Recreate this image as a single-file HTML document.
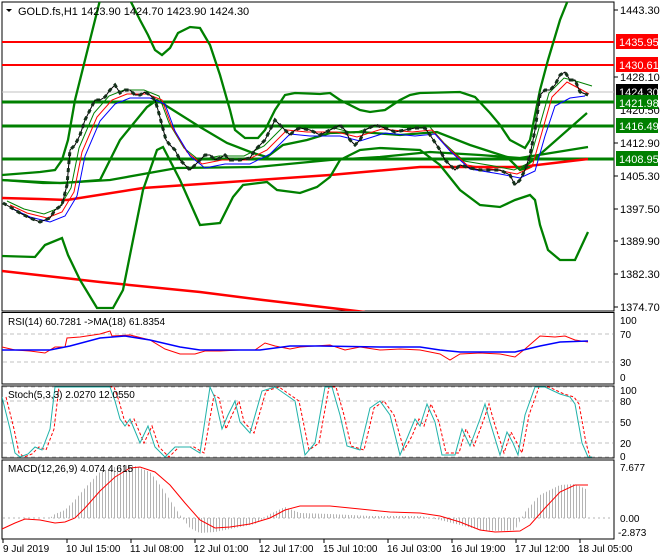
<!DOCTYPE html>
<html><head><meta charset="utf-8"><style>
html,body{margin:0;padding:0;background:#fff;}
svg{display:block;font-family:"Liberation Sans",sans-serif;}
</style></head><body>
<svg width="660" height="560" viewBox="0 0 660 560" xmlns="http://www.w3.org/2000/svg">
<defs>
<pattern id="hist" width="3" height="10" patternUnits="userSpaceOnUse"><rect x="0" y="0" width="1" height="10" fill="#b4b4b4"/></pattern>
<clipPath id="cm"><rect x="2" y="2" width="612" height="309"/></clipPath>
<clipPath id="cs"><rect x="2" y="386" width="612" height="72"/></clipPath>
</defs>
<rect width="660" height="560" fill="#fff"/>
<rect x="2" y="2" width="612" height="309" fill="none" stroke="#000"/>
<rect x="2" y="312.5" width="612" height="71.5" fill="none" stroke="#000"/>
<rect x="2" y="386" width="612" height="72" fill="none" stroke="#000"/>
<rect x="2" y="460" width="612" height="79" fill="none" stroke="#000"/>

<g clip-path="url(#cm)">
<line x1="2" y1="92" x2="614" y2="92" stroke="#c0c0c0"/>
<line x1="2" y1="42" x2="614" y2="42" stroke="#f00" stroke-width="2"/>
<line x1="2" y1="65" x2="614" y2="65" stroke="#f00" stroke-width="2"/>
<line x1="2" y1="102" x2="614" y2="102" stroke="#008000" stroke-width="3"/>
<line x1="2" y1="126" x2="614" y2="126" stroke="#008000" stroke-width="3"/>
<line x1="2" y1="159" x2="614" y2="159" stroke="#008000" stroke-width="3"/>
<polyline fill="none" stroke="#f00" stroke-width="2.5" points="2,198 40,199 67,200 143,188 330,175 420,167 520,167 588,159"/>
<polyline fill="none" stroke="#f00" stroke-width="2.5" points="2,271 100,282 200,292 263,300 365,312"/>
<g fill="none" stroke="#008000" stroke-width="2.3">
<polyline points="2,175 40,172 55,170 62,160 68,140 75,100 85,60 95,20 100,0 130,0 140,20 148,35 155,50 162,55 170,48 178,33 190,27 200,28 210,45 220,75 230,110 235,130 245,138 258,138 265,130 275,110 285,95 295,93 320,94 330,93 340,100 360,110 370,112 385,110 400,100 410,95 420,93 460,92 475,97 490,113 500,125 510,140 525,148 530,140 535,115 540,90 548,60 560,20 568,0"/>
<polyline points="2,256 35,257 45,245 62,238 68,255 80,280 97,308 113,308 123,290 133,240 143,190 157,150 163,147 180,180 200,225 220,223 233,197 243,185 267,182 277,190 300,193 317,187 330,177 340,160 360,150 380,148 420,150 440,165 460,190 480,205 500,207 515,200 530,195 535,200 540,225 548,250 560,260 575,260 588,232"/>
<polyline points="2,180 43,183 63,183 100,180 120,140 147,107 157,100 173,110 200,127 227,143 253,153 267,157 283,145 307,140 330,133 360,132 400,135 437,132 470,145 507,157 520,170 530,167"/>
<polyline points="2,180 60,183 110,180 177,168 257,167 330,160 380,157 430,152 480,155 520,158 588,147"/>
<polyline points="520,170 537,157 587,113"/>
</g>
<g fill="none" stroke-width="1">
<polyline stroke="#008000" transform="translate(4,-2)" points="3,203 20,211 40,216 55,210 67,190 75,150 90,115 105,98 120,92 140,92 155,98 165,125 180,150 195,162 215,158 240,158 260,148 280,128 300,130 330,130 350,135 375,127 405,130 425,128 440,145 460,163 490,168 510,172 525,165 535,130 545,95 560,80 575,84 588,88"/>
<polyline stroke="#f00" transform="translate(7,2)" points="3,203 20,211 40,216 55,210 67,190 75,150 90,115 105,98 120,92 140,92 155,98 165,125 180,150 195,162 215,158 240,158 260,148 280,128 300,130 330,130 350,135 375,127 405,130 425,128 440,145 460,163 490,168 510,172 525,165 535,130 545,95 560,80 575,88 582,92"/>
<polyline stroke="#00f" transform="translate(10,6)" points="3,203 20,211 40,216 55,210 67,190 75,150 90,115 105,98 120,92 140,92 155,98 165,125 180,150 195,162 215,158 240,158 260,148 280,128 300,130 330,130 350,135 375,127 405,130 425,128 440,145 460,163 490,168 510,172 525,165 535,130 545,100 560,92 575,90"/>
</g>
<polyline fill="none" stroke="#000" stroke-width="1" points="3,203 10,207 20,213 30,218 40,222 50,218 55,210 62,205 67,185 70,150 75,145 80,135 85,120 90,110 95,100 100,100 105,97 110,90 115,85 120,93 125,90 130,90 135,95 140,95 145,92 150,95 155,100 158,110 162,125 166,140 170,145 175,150 180,160 185,165 190,170 195,165 200,160 205,155 210,155 215,160 220,158 225,155 230,160 240,160 250,158 255,150 260,145 265,140 270,130 275,120 280,125 285,130 290,135 295,130 300,128 310,130 320,135 330,130 340,125 345,130 350,140 355,145 360,140 365,130 375,125 385,128 395,132 405,130 415,128 425,128 430,135 440,150 445,160 450,165 455,170 460,165 470,168 480,170 490,170 500,170 510,175 515,185 520,180 525,170 530,155 535,130 540,95 545,90 550,90 555,85 560,75 565,72 570,80 575,80 580,92 588,95"/>
<polyline fill="none" stroke="#14301a" stroke-width="3" stroke-dasharray="4 4" points="3,203 10,207 20,213 30,218 40,222 50,218 55,210 62,205 67,185 70,150 75,145 80,135 85,120 90,110 95,100 100,100 105,97 110,90 115,85 120,93 125,90 130,90 135,95 140,95 145,92 150,95 155,100 158,110 162,125 166,140 170,145 175,150 180,160 185,165 190,170 195,165 200,160 205,155 210,155 215,160 220,158 225,155 230,160 240,160 250,158 255,150 260,145 265,140 270,130 275,120 280,125 285,130 290,135 295,130 300,128 310,130 320,135 330,130 340,125 345,130 350,140 355,145 360,140 365,130 375,125 385,128 395,132 405,130 415,128 425,128 430,135 440,150 445,160 450,165 455,170 460,165 470,168 480,170 490,170 500,170 510,175 515,185 520,180 525,170 530,155 535,130 540,95 545,90 550,90 555,85 560,75 565,72 570,80 575,80 580,92 588,95"/>
</g>
<polygon points="6,9 12,9 9,12" fill="#000"/>
<text x="18" y="15" font-size="11" fill="#000">GOLD.fs,H1  1423.90 1424.70 1423.90 1424.30</text>

<g font-size="11" fill="#000">
<g stroke="#000"><line x1="614" y1="10" x2="618" y2="10"/><line x1="614" y1="77" x2="618" y2="77"/><line x1="614" y1="143" x2="618" y2="143"/><line x1="614" y1="176" x2="618" y2="176"/><line x1="614" y1="209" x2="618" y2="209"/><line x1="614" y1="241" x2="618" y2="241"/><line x1="614" y1="274" x2="618" y2="274"/><line x1="614" y1="307" x2="618" y2="307"/></g>
<text x="620" y="14">1443.30</text>
<text x="620" y="81">1428.10</text>
<text x="620" y="114">1420.50</text>
<text x="620" y="147">1412.90</text>
<text x="620" y="180">1405.30</text>
<text x="620" y="213">1397.50</text>
<text x="620" y="245">1389.90</text>
<text x="620" y="278">1382.30</text>
<text x="620" y="311">1374.70</text>
<rect x="616" y="34" width="42" height="15" fill="#f00"/><text x="619" y="46" fill="#fff">1435.95</text>
<rect x="616" y="57" width="42" height="15" fill="#f00"/><text x="619" y="69" fill="#fff">1430.61</text>
<rect x="616" y="84" width="42" height="15" fill="#000"/><text x="619" y="96" fill="#fff">1424.30</text>
<rect x="616" y="95" width="42" height="14" fill="#008000"/><text x="619" y="107" fill="#fff">1421.98</text>
<rect x="616" y="118" width="42" height="15" fill="#008000"/><text x="619" y="130" fill="#fff">1416.49</text>
<rect x="616" y="151" width="42" height="15" fill="#008000"/><text x="619" y="163" fill="#fff">1408.95</text>
</g>

<g stroke="#c0c0c0" stroke-dasharray="4 3"><line x1="3" y1="334" x2="613" y2="334"/><line x1="3" y1="362" x2="613" y2="362"/></g>
<polyline fill="none" stroke="#f00" points="2,347 15,350 30,351 45,353 55,347 65,347 67,338 80,337 100,334 110,331 112,336 130,335 150,340 165,349 180,354 195,354 205,351 220,351 240,350 255,350 265,343 275,346 290,349 300,347 330,345 345,350 360,347 380,350 400,349 420,350 440,354 450,360 460,354 480,353 500,354 515,357 525,349 540,336 555,337 565,336 575,340 588,342"/>
<polyline fill="none" stroke="#00f" stroke-width="1.5" points="2,350 50,350 70,346 100,338 125,336 150,340 180,347 200,350 260,350 290,346 320,346 380,347 420,347 440,350 460,352 515,352 540,346 560,342 588,341"/>
<text x="8" y="325" font-size="10">RSI(14) 60.7281  -&gt;MA(18) 61.8354</text>
<g font-size="10"><text x="620" y="324">100</text><text x="620" y="338">70</text><text x="620" y="366">30</text><text x="620" y="381">0</text></g>

<g stroke="#c0c0c0" stroke-dasharray="4 3"><line x1="3" y1="387" x2="613" y2="387"/><line x1="3" y1="401" x2="613" y2="401"/><line x1="3" y1="422" x2="613" y2="422"/><line x1="3" y1="443" x2="613" y2="443"/><line x1="3" y1="457" x2="613" y2="457"/></g>
<g clip-path="url(#cs)">
<polyline fill="none" stroke="#f00" stroke-dasharray="3 2" transform="translate(4,0)" points="2,397 10,429 15,453 20,457 28,454 35,447 42,450 50,429 55,387 85,387 110,387 115,401 120,419 125,426 130,419 140,443 148,426 155,447 165,457 175,447 190,447 200,453 210,395 215,398 222,429 228,415 235,401 240,422 250,433 262,391 275,387 295,401 305,450 315,443 325,387 332,387 340,415 347,446 360,450 370,408 380,401 390,415 400,450 408,436 415,419 420,426 427,404 435,422 442,453 455,453 462,429 470,446 480,419 485,404 490,422 500,453 507,432 513,443 518,453 525,415 535,387 545,387 560,394 570,397 575,404 582,443 586,457"/>
<polyline fill="none" stroke="#20b2aa" points="2,397 10,429 15,453 20,457 28,454 35,447 42,450 50,429 55,387 85,387 110,387 115,401 120,419 125,426 130,419 140,443 148,426 155,447 165,457 175,447 190,447 200,453 210,387 215,398 222,429 228,415 235,401 240,422 250,433 262,391 275,387 295,401 305,455 315,443 325,387 332,387 340,415 347,446 360,450 370,408 380,401 390,415 400,455 408,436 415,419 420,426 427,404 435,422 442,455 455,455 462,429 470,446 480,419 485,404 490,422 500,455 507,432 513,443 518,455 525,415 535,387 545,387 560,394 570,397 575,404 582,443 588,457 592,457"/>
</g>
<text x="8" y="398" font-size="10">Stoch(5,3,3) 2.0270 12.0550</text>
<g font-size="10"><text x="620" y="394">100</text><text x="620" y="405">80</text><text x="620" y="426">50</text><text x="620" y="447">20</text><text x="620" y="460">0</text></g>

<polygon fill="url(#hist)" points="50,518 55,514 65,510 75,500 85,488 100,472 120,465 135,466 150,472 160,485 170,500 180,515 190,528 200,533 215,532 235,528 255,524 270,514 285,507 300,513 330,514 370,516 420,516 440,520 460,525 480,530 500,531 515,530 525,512 540,495 550,490 560,485 575,484 588,490 588,518"/>
<line x1="3" y1="518" x2="613" y2="518" stroke="#b4b4b4" stroke-dasharray="2 3"/>
<polyline fill="none" stroke="#f00" points="2,529 15,523 25,519 40,520 55,523 65,522 75,518 85,508 100,491 115,477 130,468 140,467 155,472 170,485 185,503 200,520 215,528 230,527 250,524 270,518 285,510 300,506 330,506 360,509 390,512 420,513 440,516 460,522 480,530 495,532 520,531 530,525 545,508 560,492 575,485 588,485"/>
<text x="8" y="472" font-size="10">MACD(12,26,9) 4.074 4.615</text>
<g font-size="10"><text x="620" y="471">7.677</text><text x="620" y="522">0.00</text><text x="618" y="536">-2.873</text></g>

<g stroke="#000"><line x1="3" y1="539" x2="3" y2="543"/><line x1="67" y1="539" x2="67" y2="543"/><line x1="131" y1="539" x2="131" y2="543"/><line x1="195" y1="539" x2="195" y2="543"/><line x1="260" y1="539" x2="260" y2="543"/><line x1="324" y1="539" x2="324" y2="543"/><line x1="388" y1="539" x2="388" y2="543"/><line x1="452" y1="539" x2="452" y2="543"/><line x1="516" y1="539" x2="516" y2="543"/><line x1="580" y1="539" x2="580" y2="543"/></g>
<g font-size="10"><text x="3" y="552">9 Jul 2019</text><text x="66" y="552">10 Jul 15:00</text><text x="130" y="552">11 Jul 08:00</text><text x="194" y="552">12 Jul 01:00</text><text x="259" y="552">12 Jul 17:00</text><text x="323" y="552">15 Jul 10:00</text><text x="387" y="552">16 Jul 03:00</text><text x="451" y="552">16 Jul 19:00</text><text x="515" y="552">17 Jul 12:00</text><text x="578" y="552">18 Jul 05:00</text></g>
</svg>
</body></html>
